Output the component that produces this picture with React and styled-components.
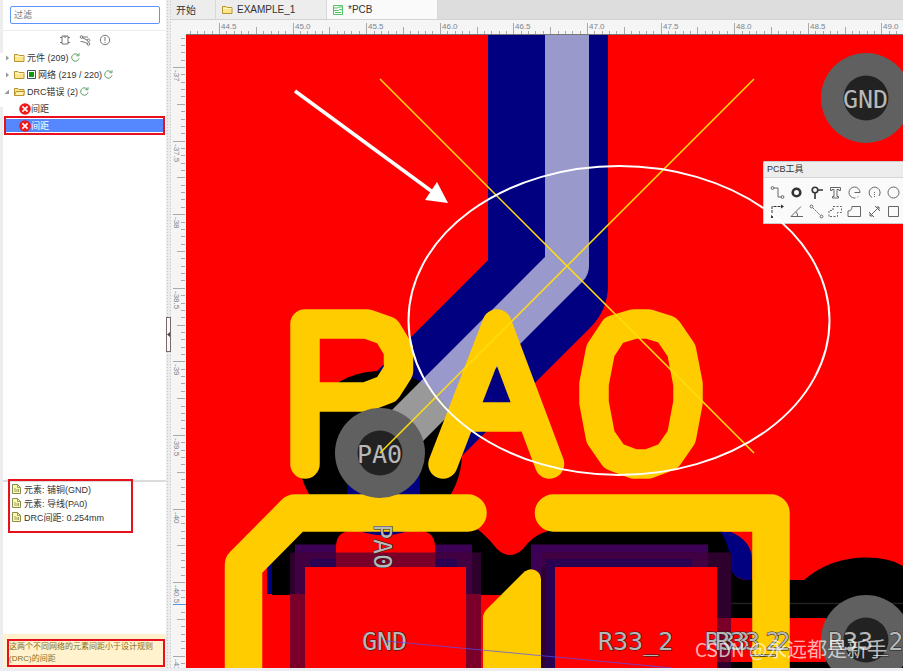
// PCB editor: design tree on the left, rulers and the board canvas on the right.
import styled, { createGlobalStyle } from "styled-components";

const GlobalStyle = createGlobalStyle`
  * {
    box-sizing: border-box;
  }
  body {
    margin: 0;
    background: #ededed;
    color: #333;
    font-family: "Liberation Sans", "Noto Sans CJK SC", sans-serif;
    font-size: 9px;
  }
  button, input {
    font: inherit;
    color: inherit;
  }
  button {
    padding: 0;
    border: 0;
    background: none;
  }
  svg {
    display: block;
  }
`;

const Page = styled.div`
  display: flex;
  height: 100vh;
  padding-bottom: 3px;
  overflow: hidden;
  background: #ececf2;
`;
const Edge = styled.div`
  width: 3px;
  flex: none;
  padding-top: 53px;
  background: #ededed;
`;
const EdgeTab = styled.div`
  height: 54px;
  background: #fff;
`;
const Sidebar = styled.aside`
  width: 163px;
  flex: none;
  display: flex;
  flex-direction: column;
  background: #fff;
`;
const Search = styled.div`
  height: 31px;
  padding: 6px 7px;
  border-bottom: 1px solid #ececec;
`;
const SearchInput = styled.input`
  display: block;
  width: 150px;
  height: 18px;
  padding: 0 3px;
  border: 1px solid #5f94ff;
  border-radius: 2px;
  outline: 0;
  background: #fff;
  &::placeholder {
    color: #777;
    opacity: 1;
  }
`;
const Filters = styled.div`
  display: flex;
  justify-content: center;
  gap: 8px;
  height: 18px;
  align-items: center;
`;
const Tree = styled.ul`
  flex: 1;
  margin: 0;
  padding: 0;
  list-style: none;
`;
const Row = styled.li`
  display: flex;
  align-items: center;
  height: ${(p) => (p.$selected ? "13px" : "17px")};
  margin-top: ${(p) => (p.$selected ? "1px" : "0")};
  padding-left: ${(p) => (p.$selected ? "13px" : p.$child ? "16px" : "1px")};
  gap: ${(p) => (p.$child ? "0" : "2px")};
  white-space: nowrap;
  color: ${(p) => (p.$selected ? "#fff" : "#333")};
  background: ${(p) => (p.$selected ? "#5588ff" : "none")};
`;
const Mark = styled.li`
  height: 19px;
  margin: -1px 1px 0;
  border: 2px solid #e8101c;
`;
const Details = styled.section`
  height: 154px;
  border-top: 2px solid #dcdcdc;
  padding-left: 5px;
`;
const DetailList = styled.ul`
  width: 125px;
  height: 54px;
  margin: -3px 0 0;
  padding: 1px 2px;
  border: 2px solid #e8101c;
  list-style: none;
`;
const Detail = styled.li`
  display: flex;
  align-items: center;
  gap: 3px;
  height: 14px;
`;
const Note = styled.div`
  padding: 5px 1px 1px 4px;
  background: #fff2cc;
`;
const NoteText = styled.p`
  margin: 0;
  height: 28px;
  border: 2px solid #e8101c;
  font-size: 8px;
  line-height: 12px;
  color: #8a6d1f;
`;
const Splitter = styled.div`
  width: 5px;
  flex: none;
  display: flex;
  align-items: center;
  background: radial-gradient(circle at center, #c8c8c8 1px, #ececec 1px) 0 0 / 3px 3px;
`;
const Handle = styled.button`
  display: flex;
  align-items: center;
  width: 5px;
  height: 35px;
  border: 1px solid #776a6a;
  background: #fafafa;
`;
const Main = styled.main`
  flex: 1;
  min-width: 0;
  display: flex;
  flex-direction: column;
`;
const Tabs = styled.div`
  display: flex;
  height: 20px;
  flex: none;
  background: #ddd;
  border-bottom: 1px solid #d2d2d2;
`;
const Tab = styled.button`
  display: flex;
  align-items: center;
  gap: ${(p) => (p.$active ? "5px" : "4px")};
  width: ${(p) => (p.$short ? "45px" : "111px")};
  padding-left: ${(p) => (p.$short ? "5px" : "6px")};
  border-right: 1px solid #d8d8d8;
  background: ${(p) => (p.$active ? "#fafafa" : "#ededed")};
  font-size: 10px;
`;
const Board = styled.div`
  flex: 1;
  min-height: 0;
  display: grid;
  grid-template-columns: 15px 1fr;
  grid-template-rows: 15px 1fr;
  background: #f5f5f5;
`;
const RulerSvg = styled.svg`
  width: 100%;
  height: 100%;
  overflow: hidden;
  font-size: 8px;
  fill: #7a8490;
  stroke: none;
`;
const Canvas = styled.div`
  position: relative;
  overflow: hidden;
  background: #f00;
`;
const Drawing = styled.svg`
  position: absolute;
  inset: 0;
  width: 100%;
  height: 100%;
  pointer-events: none;
`;
const NetText = styled.text`
  font-family: "DejaVu Sans Mono", monospace;
  font-size: 25px;
  fill: #b8b8b8;
  stroke: #222;
  stroke-width: 1px;
  paint-order: stroke;
`;
const Watermark = styled.text`
  font-family: "Noto Sans CJK SC", sans-serif;
  font-size: 19px;
  fill: #fff;
  fill-opacity: 0.7;
`;
const WatermarkName = styled.tspan`
  font-size: 20px;
`;
const Toolbox = styled.section`
  position: absolute;
  top: 126px;
  right: 0;
  width: 140px;
  height: 63px;
  border: 1px solid #ccc;
  border-right: 0;
  border-radius: 2px 0 0 0;
  background: #fafafa;
`;
const ToolTitle = styled.h2`
  margin: 0;
  height: 16px;
  padding-left: 3px;
  background: #ededed;
  border-bottom: 1px solid #d6d6d6;
  font-size: 9px;
  line-height: 15px;
  font-weight: normal;
`;
const Tools = styled.div`
  display: grid;
  grid-template-columns: repeat(7, 15px);
  justify-content: space-between;
  row-gap: 4px;
  padding: 7px 2px 0 6px;
`;
const Tool = styled.button`
  width: 15px;
  height: 15px;
`;

const Folder = ({ open }) => (
  <svg width="11" height="10" viewBox="0 0 11 10" fill="#ffe58a" stroke="#b99532">
    <path d="M.5 8.5v-7h3.5l1 1h5v6z" />
    {open ? <path d="M.5 8.5 2 4.5h8.5l-1 4z" fill="#ffefaa" /> : <path d="M1 3.5h8.5" stroke="#fff5c4" />}
  </svg>
);
const Caret = ({ open }) => (
  <svg width="6" height="6" viewBox="0 0 6 6" fill="#999">
    <path d={open ? "M5 0.5v4.5H.5z" : "M2 .5 5 3 2 5.5z"} />
  </svg>
);
const Refresh = () => (
  <svg width="9" height="9" viewBox="0 0 9 9" fill="none" stroke="#5ba066">
    <path d="M8 5.3A3.700 3.700 0 1 1 7 1.900" />
    <path d="M8 .2v2.600H5.400" />
  </svg>
);
const ErrorIcon = () => (
  <svg width="12" height="12" viewBox="0 0 12 12">
    <circle cx="6" cy="6" r="5.8" fill="#f01818" />
    <path d="m3.4 3.4 5.2 5.2m0-5.2L3.4 8.6" stroke="#fff" strokeWidth="1.6" />
  </svg>
);
const NetIcon = () => (
  <svg width="9" height="9" viewBox="0 0 9 9">
    <path d="M.5.5h8v8h-8z" fill="#fff" stroke="#356" />
    <path d="M2 2h5v5H2z" fill="#0a9a0a" />
  </svg>
);
const DocIcon = () => (
  <svg width="9" height="10" viewBox="0 0 9 10">
    <path d="M.5.5h5l3 3v6h-8z" fill="#fbf8b0" stroke="#8c8c50" />
    <path d="M5.5.5v3h3M3 4v4m2-3v3m1.500-3v3" fill="none" stroke="#8c8c50" strokeWidth=".8" />
  </svg>
);
const PcbIcon = () => (
  <svg width="10" height="10" viewBox="0 0 10 10" fill="none" stroke="#4fc568">
    <path d="M.5.5h9v9h-9zM.5 3h4l1-1h4M.5 5.500h5l1-1h3M2 7.500h6" />
  </svg>
);

const groups = [
  { label: "元件 (209)" },
  { label: "网络 (219 / 220)", net: true },
  { label: "DRC错误 (2)", open: true },
];
const details = ["元素: 铺铜(GND)", "元素: 导线(PA0)", "DRC间距: 0.254mm"];

const tools = [
  ["导线", <path d="M4 3h4v9h3" />, <circle cx="2.500" cy="3" r="1.400" />, <circle cx="12.500" cy="12" r="1.400" />],
  ["焊盘", <circle cx="7.500" cy="7.500" r="3.800" strokeWidth="2.600" stroke="#333" />],
  ["过孔", <g stroke="#333" strokeWidth="1.600"><circle cx="6" cy="5" r="2.800" /><path d="M9 5h5M6 8v6" /></g>],
  ["文本", <path d="M2.500 2.500h10v3h-1.500V4.500H9v7h1.500v1.500h-6v-1.500H6v-7H4v1H2.500z" />],
  ["圆弧", <path d="M7.500 13A5.500 5.500 0 1 1 13 7.500H7.500" />, <path d="M7.500 13a5.500 5.500 0 0 0 5-3" strokeDasharray="1 2" />],
  ["中心圆弧", <path d="M5 12.500A5.500 5.500 0 1 1 12 11" />, <path d="M7.500 7v6" strokeDasharray="1 1" />],
  ["圆", <circle cx="7.500" cy="7.500" r="5.500" />],
  ["原点", <path d="M2 13V2.500h9" stroke="#333" strokeDasharray="3 1" />, <path d="m11 0.500 3 2-3 2zM1 11h2v3H1z" fill="#333" stroke="none" />],
  ["量角器", <path d="M12 2.500 2 12.500h12M7 8q2 2 1.500 4" />],
  ["连接焊盘", <path d="m4 4 7 7" strokeDasharray="2 1" />, <circle cx="2.500" cy="2.500" r="1.400" />, <circle cx="12.500" cy="12.500" r="1.400" />],
  ["铺铜", <path d="M1 12.500v-6h4v-4h8.500v6h-4v4z" strokeDasharray="2 1.500" />],
  ["实心填充", <path d="M1 12.500V7q4 0 4-4.500h8.500v10z" />],
  ["尺寸", <path d="m3 12 9-9M2 8l5 5M8 2l5 5M9.500 3H12v2.500M3 9.500V12h2.500" />],
  ["矩形", <path d="M2.500 2.500h10v10h-10z" />],
];

// One labelled step every 0.5 mm, ten ticks in each
const STEP = 73.6;
const ticks = Array.from({ length: 400 }, (_, i) => i - 10);
const tickLength = (i) => (i % 10 === 0 ? 12 : i % 5 === 0 ? 8 : 4);

const TopRuler = () => (
  <RulerSvg>
    {ticks.map((i) => {
      const x = Math.round(33 + (i * STEP) / 10);
      return (
        <g key={i}>
          <rect x={x} y={15 - tickLength(i)} width="1" height={tickLength(i)} fill="#aaa" />
          {i % 10 === 0 && <text x={x + 2} y="9">{(44.5 + i / 20).toFixed(1)}</text>}
        </g>
      );
    })}
    <path d="M0 14.500h4000" stroke="#777" />
  </RulerSvg>
);
const SideRuler = () => (
  <RulerSvg>
    {ticks.map((i) => {
      const y = Math.round(32 + (i * STEP) / 10);
      return (
        <g key={i}>
          <rect x={14 - tickLength(i)} y={y} width={tickLength(i)} height="1" fill="#aaa" />
          {i % 10 === 0 && <text transform={`translate(3 ${y + 3}) rotate(90)`}>{-37 - i / 20}</text>}
        </g>
      );
    })}
    <path d="M2 569.500h13" stroke="#4a98e8" />
  </RulerSvg>
);

const Pad = ({ x, y }) => (
  <g>
    <circle cx={x} cy={y} r="45" fill="#606060" />
    <circle cx={x} cy={y} r="22.500" fill="#222" />
  </g>
);

const Copper = () => (
  <Drawing aria-label="PCB">
    <g transform="translate(-186 -35)" strokeLinejoin="round">
      <path d="M548 0V285L380 453" fill="none" stroke="#000080" strokeWidth="120" />
      <circle cx="380" cy="453" r="82" />
      <path d="M567 0V266L380 453" fill="none" stroke="#fff" strokeOpacity=".6" strokeWidth="44" />

      {/* clearance around the pads */}
      <path d="M267 520h8v74h-8z" fill="#000080" />
      <path d="M272 520H465Q484 532 497 549Q510 561 523 549Q533 535 548 531V520H715Q731 535 731 565Q733 580 748 580H804Q830 557.500 866 557.500Q890 557.500 903 566H4000V618H717V595H272z" />
      <path d="M717 662H4000V668H717z" />
      <path d="M720 532H731Q752 541 752 560V580H746Q731 578 731 565Q729 542 720 532z" fill="#000080" />
      <circle cx="866" cy="640" r="82" />
      <path d="M717 603.500H4000" stroke="#222" strokeWidth="1.500" />

      {/* left pad */}
      <path d="M295 544.500H472V594H295z" fill="#3d0057" />
      <path d="M290 552.500H481V594H290z" fill="#2d002d" />
      <path d="M295 552.500H472V594H295z" fill="#410042" />
      <path d="M310 559H457V567H310z" fill="#2a0052" />
      <path d="M290 594H481V668H290z" fill="#7a0029" />
      <path d="M336 567V547Q336 531 352 531H419Q435 531 435 547V567z" fill="#f00" />
      <path d="M336 552.500H435V567H336z" fill="#7a0029" />
      <path d="M305 567H466V668H305z" fill="#f00" />
      <path d="M347 470H420V525Q384 546 347 525z" fill="#000080" />

      {/* right pad */}
      <path d="M531 544.500H708V600H531z" fill="#3d0057" />
      <path d="M541 552.500H731V668H541z" fill="#2d002d" />
      <path d="M541 552.500H708V567H541z" fill="#410042" />
      <path d="M545 559H692V567H555V668H545z" fill="#2a0052" />
      <path d="M717 618H731V662H717z" fill="#7a0029" />
      <path d="M731 618H826V662H731z" fill="#f00" />
      <path d="M555 567H717V668H555z" fill="#f00" />

      {/* silkscreen */}
      <g fill="none" stroke="#fc0" strokeWidth="37.500" strokeLinecap="round">
        <path d="M243.500 4000V565L295 513H468" />
        <path d="M553.500 513H771V4000" />
      </g>
      <path d="M483 4000V618Q483 613 487 609L523 573Q531 566 538 572Q541 575 541 579V4000z" fill="#fc0" />
      <g fill="none" stroke="#fc0" strokeWidth="29.500" strokeLinecap="round">
        <path d="M305 464V324H367L387 331L398.500 350V371L387 389L366 397H305" />
        <path d="M443 464L497 324L549.500 464M475 417H518" />
        <path d="M634 324h14.500L667.500 330L681.500 350.500L688 384V402.500L681.500 437L668 456.500L648 464H634L614 456.500L600.500 437L594 402.500V384L600.500 350.500L614 330z" />
      </g>

      <Pad x={380} y={453} />
      <Pad x={866} y={98} />
      <Pad x={866} y={640} />
      <NetText x="357" y="463">PA0</NetText>
      <NetText x="843" y="108">GND</NetText>
      <NetText x="362" y="650">GND</NetText>
      <NetText transform="translate(374 524) rotate(90)">PA0</NetText>
      <NetText x="598" y="650">R33_2</NetText>
      <NetText x="705" y="650">R33_2</NetText>
      <NetText x="715" y="650">R33_2</NetText>
      <NetText x="828" y="650">R33_2</NetText>
      <path d="M386 641L672 668" stroke="#5050ff" strokeOpacity=".7" />
      <path d="M380 79L754 453M754 79L380 453" stroke="#fd1" strokeWidth="1.500" />
    </g>
  </Drawing>
);

const Annotations = () => (
  <Drawing>
    <g transform="translate(-186 -35)">
      <ellipse cx="619" cy="320.500" rx="210.500" ry="154.500" fill="none" stroke="#fff" strokeWidth="2" />
      <path d="M295 91L434 193" stroke="#fff" strokeWidth="3.500" />
      <path d="M448 203L437 182L425 200z" fill="#fff" />
      <Watermark x="695" y="657">
        CSDN @<WatermarkName>永远都是新手</WatermarkName>
      </Watermark>
    </g>
  </Drawing>
);

const App = () => {
  return (
    <Page>
      <GlobalStyle />
      <Edge>
        <EdgeTab />
      </Edge>
      <Sidebar>
        <Search>
          <SearchInput aria-label="过滤" placeholder="过滤" />
        </Search>
        <Filters>
          <button aria-label="元件">
            <svg width="12" height="12" viewBox="0 0 12 12" fill="none" stroke="#777">
              <path d="M3 2h6v8H3zM1 3.500h2M1 8.500h2M9 3.500h2M9 8.500h2M5 2v1h2V2" />
            </svg>
          </button>
          <button aria-label="网络">
            <svg width="12" height="12" viewBox="0 0 12 12" fill="none" stroke="#777">
              <path d="M3.500 3H9M3 3.500l5.500 2.800M1.500 7.500 5 8l4 1.800" />
              <circle cx="2.500" cy="3" r="1.300" />
              <circle cx="9.500" cy="6.300" r="1.300" />
              <circle cx="9.500" cy="10" r="1.300" />
            </svg>
          </button>
          <button aria-label="DRC错误">
            <svg width="12" height="12" viewBox="0 0 12 12" fill="none" stroke="#777">
              <circle cx="6" cy="6" r="4.700" />
              <path d="M6 3v4M6 8v1" />
            </svg>
          </button>
        </Filters>
        <Tree>
          {groups.map((g) => (
            <Row key={g.label}>
              <Caret open={g.open} />
              <span />
              <Folder open={g.open} />
              {g.net && <NetIcon />}
              <span>{g.label}</span>
              <button aria-label="刷新">
                <Refresh />
              </button>
            </Row>
          ))}
          <Row $child>
            <ErrorIcon />
            间距
          </Row>
          <Mark>
            <Row as="div" $child $selected>
              <ErrorIcon />
              间距
            </Row>
          </Mark>
        </Tree>
        <Details>
          <DetailList>
            {details.map((d) => (
              <Detail key={d}>
                <DocIcon />
                {d}
              </Detail>
            ))}
          </DetailList>
        </Details>
        <Note>
          <NoteText>
            这两个不同网络的元素间距小于设计规则
            <br />
            (DRC)的间距
          </NoteText>
        </Note>
      </Sidebar>
      <Splitter>
        <Handle aria-label="收起">
          <svg width="3" height="5" viewBox="0 0 3 5">
            <path d="M3 0v5L0 2.500z" fill="#544" />
          </svg>
        </Handle>
      </Splitter>
      <Main>
        <Tabs role="tablist">
          <Tab role="tab" $short>开始</Tab>
          <Tab role="tab">
            <Folder />
            EXAMPLE_1
          </Tab>
          <Tab role="tab" aria-selected $active>
            <PcbIcon />
            *PCB
          </Tab>
        </Tabs>
        <Board>
          <div />
          <TopRuler />
          <SideRuler />
          <Canvas>
            <Copper />
            <Toolbox>
              <ToolTitle>PCB工具</ToolTitle>
              <Tools>
                {tools.map(([name, ...shapes]) => (
                  <Tool key={name} aria-label={name}>
                    <svg width="15" height="15" viewBox="0 0 15 15" fill="none" stroke="#666">
                      {shapes.map((shape, i) => (
                        <g key={i}>{shape}</g>
                      ))}
                    </svg>
                  </Tool>
                ))}
              </Tools>
            </Toolbox>
            <Annotations />
          </Canvas>
        </Board>
      </Main>
    </Page>
  );
};

export default App;
